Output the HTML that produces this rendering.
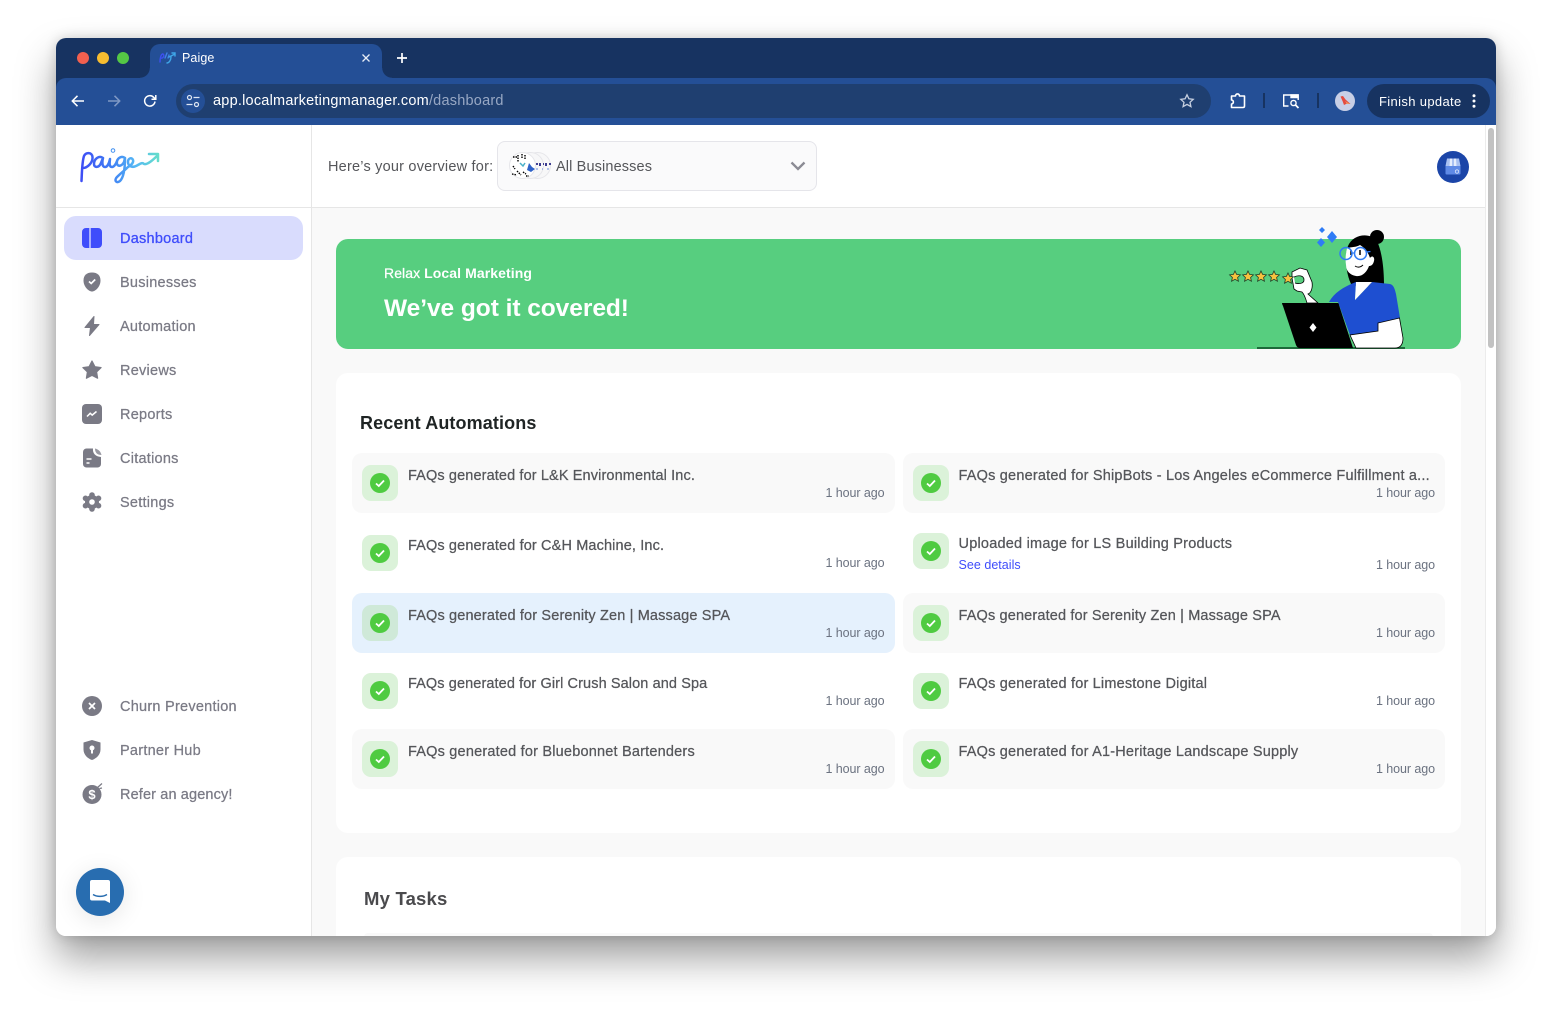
<!DOCTYPE html>
<html><head><meta charset="utf-8"><title>Paige</title>
<style>
*{box-sizing:border-box}
html,body{margin:0;padding:0;width:1552px;height:1010px;overflow:hidden;background:#fff;font-family:"Liberation Sans",sans-serif}
.a{position:absolute}
.t{position:absolute;white-space:nowrap}
#win{position:absolute;left:56px;top:38px;width:1440px;height:898px;border-radius:10px;box-shadow:0 22px 40px rgba(0,0,0,.38),0 0 12px rgba(0,0,0,.16)}
#clip{position:absolute;left:56px;top:38px;width:1440px;height:898px;border-radius:10px;overflow:hidden;background:#fff}
#abs{position:absolute;left:-56px;top:-38px;width:1552px;height:1010px}
.nav{font-size:14.5px;color:#7a7a85;font-weight:400;letter-spacing:.25px;-webkit-text-stroke:.25px #7a7a85}
.row{position:absolute;height:60px;border-radius:10px}
.bd{position:absolute;width:36px;height:36px;border-radius:9px;background:#dbf2d9}
.ck{position:absolute;left:8px;top:8px;width:20px;height:20px}
.rt{position:absolute;font-size:14.5px;color:#55565a;white-space:nowrap;-webkit-text-stroke:.25px #55565a}
.rs{position:absolute;font-size:12.5px;color:#6b7280;white-space:nowrap;letter-spacing:-.08px}
</style></head><body>
<div id="win"></div>
<div id="clip"><div id="abs">
<!-- browser chrome -->
<div class="a" style="left:56px;top:38px;width:1440px;height:60px;background:#173361"></div>
<div class="a" style="left:56px;top:78px;width:1440px;height:47px;background:#244f96;border-radius:10px 10px 0 0"></div>
<div class="a" style="left:150px;top:44px;width:232px;height:36px;background:#244f96;border-radius:10px 10px 0 0"></div>
<div class="a" style="left:140px;top:68px;width:10px;height:10px;background:radial-gradient(circle at 0 0,#173361 9.500px,#244f96 10px)"></div>
<div class="a" style="left:382px;top:68px;width:10px;height:10px;background:radial-gradient(circle at 100% 0,#173361 9.500px,#244f96 10px)"></div>
<div class="a" style="left:83px;top:58px;width:12px;height:12px;margin:-6px;border-radius:50%;background:#f2604f"></div>
<div class="a" style="left:103px;top:58px;width:12px;height:12px;margin:-6px;border-radius:50%;background:#f8bd30"></div>
<div class="a" style="left:123px;top:58px;width:12px;height:12px;margin:-6px;border-radius:50%;background:#55c845"></div>
<svg class="a" style="left:158px;top:50px" width="18" height="16" viewBox="0 0 18 16" fill="none" stroke-width="1.400" stroke-linecap="round"><path d="M2 12C2 8 3 4 5 4M5 4C7 5 5 9 3 8" stroke="#3d50ef"/><path d="M7 8l2-5M10 8l1-3" stroke="#3f7fe8"/><path d="M9 13c2 0 4-3 4-6M11 7l6-3M14 3h3v3" stroke="#3fa6e8"/></svg>
<div class="t" style="left:182px;top:51px;font-size:12.5px;color:#fff;letter-spacing:.1px">Paige</div>
<svg class="a" style="left:360px;top:52px" width="12" height="12" viewBox="0 0 12 12"><path d="M2.500 2.500l7 7M9.500 2.500l-7 7" stroke="#e8edf6" stroke-width="1.300"/></svg>
<svg class="a" style="left:395px;top:51px" width="14" height="14" viewBox="0 0 14 14"><path d="M7 2v10M2 7h10" stroke="#fff" stroke-width="1.700"/></svg>
<svg class="a" style="left:70px;top:93px" width="16" height="16" viewBox="0 0 16 16" fill="none" stroke="#fff" stroke-width="1.500"><path d="M14 8H2.500M7.500 2.800 2.300 8l5.200 5.200"/></svg>
<svg class="a" style="left:106px;top:93px" width="16" height="16" viewBox="0 0 16 16" fill="none" stroke="#7f98c4" stroke-width="1.500"><path d="M2 8h11.500M8.500 2.800 13.700 8l-5.200 5.200"/></svg>
<svg class="a" style="left:142px;top:93px" width="16" height="16" viewBox="0 0 16 16" fill="none" stroke="#fff" stroke-width="1.500"><path d="M13 8.500A5.200 5.200 0 1 1 11.500 4.200L13.500 6"/><path d="M13.800 2v4.300H9.500"/></svg>
<div class="a" style="left:176px;top:84px;width:1035px;height:34px;border-radius:17px;background:#1f3f70"></div>
<div class="a" style="left:181px;top:89px;width:24px;height:24px;border-radius:50%;background:#244f96"></div>
<svg class="a" style="left:185px;top:93px" width="16" height="16" viewBox="0 0 16 16" fill="none" stroke="#dfe7f4" stroke-width="1.200"><circle cx="4.500" cy="4.500" r="2"/><path d="M8.500 4.500h6M1.500 11.500h6"/><circle cx="11.500" cy="11.500" r="2"/></svg>
<div class="t" style="left:213px;top:93px;font-size:14.5px;letter-spacing:.22px;color:#fff">app.localmarketingmanager.com<span style="color:#98a8c4">/dashboard</span></div>
<svg class="a" style="left:1179px;top:93px" width="16" height="16" viewBox="0 0 16 16" fill="none" stroke="#c6cfdf" stroke-width="1.300"><path d="M8 1.800l1.900 4 4.300.5-3.200 3 .9 4.300L8 11.400l-3.900 2.200.9-4.300-3.200-3 4.300-.5z"/></svg>
<svg class="a" style="left:1229px;top:92px" width="18" height="18" viewBox="0 0 18 18" fill="none" stroke="#fff" stroke-width="1.600" stroke-linejoin="round"><path d="M2.500 4.500H6.500C6.500 1.800 10.500 1.800 10.500 4.500H15.500V14.500C15.500 15.500 15 16 14 16H2.500V12.500C5 12.500 5 8.500 2.500 8.500Z" transform="translate(0 -.5)"/></svg>
<div class="a" style="left:1263px;top:93px;width:2px;height:15px;background:#173361"></div>
<svg class="a" style="left:1282px;top:92px" width="18" height="18" viewBox="0 0 18 18" fill="none" stroke="#fff" stroke-width="1.400"><path d="M6.500 14H1.700V3h14.500v5"/><path d="M9 3h7v2.500H9z" fill="#fff"/><circle cx="11.500" cy="11" r="2.600"/><path d="M13.500 13l3 3" stroke-width="1.800"/></svg>
<div class="a" style="left:1317px;top:93px;width:2px;height:15px;background:#173361"></div>
<div class="a" style="left:1335px;top:91px;width:20px;height:20px;border-radius:50%;background:#c8cfe6"></div>
<svg class="a" style="left:1338px;top:94px" width="14" height="14" viewBox="0 0 14 14"><path d="M2.500 2.500 5 2l2.500 3.500L12.500 10 9 9.500 6 11 4.500 7z" fill="#e44a3e"/><path d="M7 7l5 3-3 0z" fill="#f09a5e"/></svg>
<div class="a" style="left:1367px;top:84px;width:123px;height:34px;border-radius:17px;background:#173361"></div>
<div class="t" style="left:1379px;top:94px;font-size:13px;color:#fff;letter-spacing:.35px">Finish update</div>
<svg class="a" style="left:1471px;top:93px" width="6" height="16" viewBox="0 0 6 16" fill="#fff"><circle cx="3" cy="2.800" r="1.500"/><circle cx="3" cy="8" r="1.500"/><circle cx="3" cy="13.200" r="1.500"/></svg>

<!-- page bg -->
<div class="a" style="left:312px;top:208px;width:1173px;height:730px;background:#f9f9f9"></div>
<div class="a" style="left:56px;top:207px;width:1429px;height:1px;background:#e6e6e6"></div>
<div class="a" style="left:311px;top:125px;width:1px;height:812px;background:#e6e6e6"></div>
<div class="a" style="left:1485px;top:125px;width:11px;height:812px;background:#fff;border-left:1px solid #ececec"></div>
<div class="a" style="left:1488px;top:128px;width:6px;height:220px;border-radius:3px;background:#c2c2c2"></div>

<!-- logo -->
<svg class="a" style="left:78px;top:144px" width="84" height="44" viewBox="0 0 84 44" fill="none" stroke-linecap="round" stroke-linejoin="round">
<defs><linearGradient id="lg" gradientUnits="userSpaceOnUse" x1="0" x2="82" y1="22" y2="22"><stop offset="0" stop-color="#3e48f5"/><stop offset=".4" stop-color="#3f7ef4"/><stop offset=".7" stop-color="#55b8f5"/><stop offset="1" stop-color="#66e0c8"/></linearGradient></defs>
<path d="M3.500 37C4 28 4 18 6 12C8 8 14 8 14.500 13C15 19 9 24 5 24M25 14C21 11 16 15 16 20C16 24 21 24 23 19L25 14C24 18 24 23 27 23C29 23 31 20 32 15C31.500 19 31 23 34 23C36 23 38 20 39 17M47 14C43 11 38 15 39 20C40 23 44 22 46 18L47 14C47 22 46 33 42 37C38 40 36 36 39 33C43 29 47 26 50 23C52 22 56 19 55 16C54 13 50 14 50 18C50 22 54 24 58 22C62 20 64 18 66 20C69 21 74 17 80 11M71 10H80V17" stroke="url(#lg)" stroke-width="2.500"/>
<circle cx="35" cy="6.500" r="1.800" stroke="#3f8ff0" stroke-width="1"/></svg>

<!-- top -->
<div class="t" style="left:328px;top:159px;font-size:14.5px;color:#55565a;letter-spacing:.21px">Here’s your overview for:</div>
<div class="a" style="left:497px;top:141px;width:320px;height:50px;border-radius:8px;background:#fafafb;border:1px solid #e5e5ea"></div>
<div class="a" style="left:524px;top:152px;width:27px;height:27px;border-radius:50%;background:#f7f7f8;border:1px solid #e6e6ea"></div>
<div class="a" style="left:517px;top:152px;width:27px;height:27px;border-radius:50%;background:#f7f7f8;border:1px solid #e6e6ea"></div>
<div class="a" style="left:509px;top:152px;width:27px;height:27px;border-radius:50%;background:#fff;border:1px solid #e6e6ea"></div>
<svg class="a" style="left:509px;top:152px" width="43" height="27" viewBox="0 0 43 27" fill="none"><path d="M4 5h4M9 3v7M13 2v5M16 3v4M3 22l5 1M8 19l4 4M14 20l3 2M4 14l2 3M17 24h3" stroke="#000" stroke-width="1.400" stroke-dasharray="1.500 1"/><path d="M11 11l3 3 2-3" stroke="#4ab0c8" stroke-width="1.500"/><path d="M20 11l3 4 3 2-4 3-4-2z" fill="#2f62c8"/><path d="M27 12h2M31 11v3M34 12h1M37 11v3M40 12h2" stroke="#272785" stroke-width="1.800"/><path d="M27 17h2M33 17h1M38 17h2" stroke="#6a8ce0"/></svg>
<div class="t" style="left:556px;top:159px;font-size:14.5px;color:#55565a;letter-spacing:.13px">All Businesses</div>
<svg class="a" style="left:789px;top:159px" width="18" height="14" viewBox="0 0 18 14" fill="none"><path d="M2.500 3.500 9 10l6.500-6.500" stroke="#8b8b94" stroke-width="2.300"/></svg>
<div class="a" style="left:1437px;top:151px;width:32px;height:32px;border-radius:50%;background:#1b45a8"></div>
<svg class="a" style="left:1442px;top:156px" width="22" height="22" viewBox="0 0 22 22"><path d="M3.500 10h15v7.500a1 1 0 0 1-1 1h-13a1 1 0 0 1-1-1z" fill="#5f8ae6"/><path d="M5 2.500h12L18.500 10H3.500z" fill="#a9c1f2"/><path d="M8 2.500h2v7.500H7.500zM12 2.500h2l.5 7.500H12z" fill="#f0f4ff" opacity=".85"/><circle cx="15" cy="15.500" r="1.700" fill="none" stroke="#dde7fb" stroke-width=".8"/></svg>

<!-- sidebar active -->
<div class="a" style="left:64px;top:216px;width:239px;height:44px;border-radius:12px;background:#d9dcfd"></div>
<svg class="a" style="left:82px;top:228px" width="20" height="20" viewBox="0 0 20 20"><path d="M7.300 0H4a4 4 0 0 0-4 4v12a4 4 0 0 0 4 4h3.300zM8.700 0H16a4 4 0 0 1 4 4v12a4 4 0 0 1-4 4H8.700z" fill="#3f4dfb"/></svg>
<div class="t nav" style="left:120px;top:231px;color:#3f4dfb;-webkit-text-stroke:.3px #3f4dfb">Dashboard</div>
<svg class="a" style="left:82px;top:272px" width="20" height="20" viewBox="0 0 20 20"><path d="M10 .5C15.500 .5 18.500 3.500 18.500 8.500 18.500 14.500 13.500 19.500 10 19.500 6.500 19.500 1.500 14.500 1.500 8.500 1.500 3.500 4.500 .5 10 .5z" fill="#7a7a85"/><path d="M7 9.500l2.200 2 4-4" fill="none" stroke="#fff" stroke-width="1.700"/></svg>
<div class="t nav" style="left:120px;top:275px">Businesses</div>
<svg class="a" style="left:82px;top:316px" width="20" height="20" viewBox="0 0 20 20"><path d="M12 .5 3 11.500h5.500L7.500 19.500 17 8.500h-5.500z" fill="#7a7a85" stroke="#7a7a85" stroke-linejoin="round"/></svg>
<div class="t nav" style="left:120px;top:319px">Automation</div>
<svg class="a" style="left:82px;top:360px" width="20" height="20" viewBox="0 0 20 20"><path d="M10 1l2.900 5.700 6.200.9-4.500 4.400 1 6.200L10 15.300l-5.600 2.900 1-6.200L.9 7.600l6.200-.9z" fill="#7a7a85" stroke="#7a7a85" stroke-width="1.200" stroke-linejoin="round"/></svg>
<div class="t nav" style="left:120px;top:363px">Reviews</div>
<svg class="a" style="left:82px;top:404px" width="20" height="20" viewBox="0 0 20 20"><rect width="20" height="20" rx="4" fill="#7a7a85"/><path d="M5 12.500l3.200-3.200 2 1.800L14.500 7.500" fill="none" stroke="#fff" stroke-width="1.500"/></svg>
<div class="t nav" style="left:120px;top:407px">Reports</div>
<svg class="a" style="left:82px;top:448px" width="20" height="20" viewBox="0 0 20 20"><path d="M4.500 .5H11C10.500 5 13 8.500 19 9V16a3.500 3.500 0 0 1-3.500 3.500H4.500A3.500 3.500 0 0 1 1 16V4A3.500 3.500 0 0 1 4.500 .5z" fill="#7a7a85"/><path d="M13 .5C17 1.500 18.500 3.500 19.500 7 15.500 7 13 5 13 .5z" fill="#9a9aa3"/><path d="M4.500 11h5M4.500 15h3" stroke="#fff" stroke-width="1.500"/></svg>
<div class="t nav" style="left:120px;top:451px">Citations</div>
<svg class="a" style="left:82px;top:492px" width="20" height="20" viewBox="0 0 20 20" fill="#7a7a85"><circle cx="10" cy="10" r="7"/><circle cx="10" cy="3" r="2.800"/><circle cx="10" cy="17" r="2.800"/><circle cx="3.500" cy="6.300" r="2.800"/><circle cx="16.500" cy="6.300" r="2.800"/><circle cx="3.500" cy="13.700" r="2.800"/><circle cx="16.500" cy="13.700" r="2.800"/><circle cx="10" cy="10" r="2.800" fill="#fff"/></svg>
<div class="t nav" style="left:120px;top:495px">Settings</div>
<svg class="a" style="left:82px;top:696px" width="20" height="20" viewBox="0 0 20 20"><circle cx="10" cy="10" r="10" fill="#7a7a85"/><path d="M7 7l6 6M13 7l-6 6" stroke="#fff" stroke-width="1.700"/></svg>
<div class="t nav" style="left:120px;top:699px">Churn Prevention</div>
<svg class="a" style="left:82px;top:740px" width="20" height="20" viewBox="0 0 20 20"><path d="M10 0 18.500 2.500V9.500C18.500 14.500 14.500 18.500 10 20 5.500 18.500 1.500 14.500 1.500 9.500V2.500z" fill="#7a7a85"/><circle cx="10" cy="8" r="2.500" fill="#fff"/><path d="M9 9h2v4.500H9z" fill="#fff"/></svg>
<div class="t nav" style="left:120px;top:743px">Partner Hub</div>
<svg class="a" style="left:82px;top:783px" width="21" height="21" viewBox="0 0 21 21"><circle cx="10" cy="11.500" r="9.500" fill="#7a7a85"/><path d="M15.500 4.500 20 .5M17.500 5.500l2.500-.5" stroke="#7a7a85" stroke-width="1.200"/><text x="10" y="16" text-anchor="middle" font-size="13" font-weight="700" fill="#fff" font-family="Liberation Sans">$</text></svg>
<div class="t nav" style="left:120px;top:787px;letter-spacing:.13px">Refer an agency!</div>

<div class="a" style="left:76px;top:868px;width:48px;height:48px;border-radius:50%;background:#286db0;box-shadow:0 4px 24px rgba(0,0,0,.1)"></div>
<svg class="a" style="left:89px;top:879px" width="22" height="26" viewBox="0 0 22 26"><path d="M3 1h16a2 2 0 0 1 2 2v21l-5-2.500H3a2 2 0 0 1-2-2V3a2 2 0 0 1 2-2z" fill="#fff"/><path d="M4 15.500c4 2.500 10 2.500 14 0" fill="none" stroke="#286db0" stroke-width="1.400"/></svg>

<!-- banner -->
<div class="a" style="left:336px;top:239px;width:1125px;height:110px;border-radius:12px;background:#57ce7f"></div>
<div class="t" style="left:384px;top:265px;font-size:14px;color:#fff;letter-spacing:.08px;font-weight:700"><span style="font-weight:400;-webkit-text-stroke:.25px #fff">Relax</span> Local Marketing</div>
<div class="t" style="left:384px;top:295px;font-size:24.5px;color:#fff;font-weight:700;letter-spacing:-.05px">We’ve got it covered!</div>
<svg class="a" style="left:1200px;top:220px" width="230" height="140" viewBox="0 0 230 140">
<path d="M122 7l3 3-3 3-3-3zM132 11l5 6-5 6-5-6zM121 18l4 4.500-4 4.500-4-4.500z" fill="#2f7cf6"/>
<path d="M57 128H205" stroke="#1c6a3a" stroke-width="2"/>
<circle cx="177" cy="17" r="7" fill="#000"/>
<path d="M148 26C153 14 170 12 177 21C182 32 184 48 184 66L152 66C146 55 144 36 148 26z" fill="#000"/>
<path d="M147 28C152 27 157 27 160 25C165 28 168 32 170 38C172 35 175 37 174 41C173 45 171 46 169 46C167 52 162 57 156 56C150 55 146 51 146 45C145 38 146 33 147 28z" fill="#fff"/>
<path d="M155 46c3 2 6 1 8-1" stroke="#000" stroke-width="1" fill="none"/>
<path d="M151 30v5" stroke="#000" stroke-width="1.500"/><path d="M160 30v5" stroke="#000" stroke-width="1.500"/>
<circle cx="146" cy="33.500" r="6" fill="none" stroke="#2f7cf6" stroke-width="1.500"/><circle cx="160.500" cy="33.500" r="6" fill="none" stroke="#2f7cf6" stroke-width="1.500"/><path d="M152 33h3M166.500 32l4-.5" stroke="#2f7cf6" stroke-width="1.300"/>
<path d="M129 82C134 73 143 67 156 62L155 80 172 62L190 64C194 65 195 70 196 74L200 98 178 103 179 111 150 115 138 82z" fill="#1e4fd1"/>
<path d="M156 62 155 80 172 62z" fill="#fff"/>
<path d="M178 103 199.500 98 203 118C203 125 200 128 195 128L156 128 150 115 178 111z" fill="#fff" stroke="#000" stroke-width=".8"/>
<path d="M107 83C105 76 103 73 102 72L97 71L94 69L92 58L92 52L100 48L107 50L112 62C113 68 111 73 108 74L118 83z" fill="#fff" stroke="#000" stroke-width=".8"/>
<path d="M94 57C98 55 104 55 104 60C104 64 98 64 95 63" fill="#57ce7f" stroke="#000" stroke-width=".8"/>
<path d="M82 83H137C138 83 139 83 139 85L153 128H100C98 128 97 127 96 125L83 86C82 84 82 83 82 83z" fill="#000"/>
<path d="M113 103l3.500 4.500-3.500 4.500-3.500-4.500z" fill="#fff"/>
<g fill="#f7c23f" stroke="#1f3d26" stroke-width=".8"><path id="s" d="M35 51l1.600 3.400 3.800.5-2.800 2.600.8 3.700L35 59.300l-3.400 1.900.8-3.700-2.800-2.600 3.800-.5z"/><use href="#s" x="13"/><use href="#s" x="26"/><use href="#s" x="39"/><use href="#s" x="53" y="2"/></g>
</svg>

<!-- cards -->
<div class="a" style="left:336px;top:373px;width:1125px;height:460px;border-radius:12px;background:#fff"></div>
<div class="t" style="left:360px;top:413px;font-size:18px;font-weight:700;color:#1f2424;letter-spacing:.12px">Recent Automations</div>

<div class="row" style="left:352px;top:453px;width:543px;background:#f9f9f9"></div>
<div class="row" style="left:903px;top:453px;width:542px;background:#f9f9f9"></div>
<div class="row" style="left:352px;top:593px;width:543px;background:#e5f1fd"></div>
<div class="row" style="left:903px;top:593px;width:542px;background:#f9f9f9"></div>
<div class="row" style="left:352px;top:729px;width:543px;background:#f9f9f9"></div>
<div class="row" style="left:903px;top:729px;width:542px;background:#f9f9f9"></div>

<!-- left col -->
<div class="bd" style="left:362px;top:465px"><svg class="ck" viewBox="0 0 20 20"><circle cx="10" cy="10" r="10" fill="#4fcb41"/><path d="M6 10.500l2.800 2.500 5.200-5.500" fill="none" stroke="#fff" stroke-width="1.800"/></svg></div>
<div class="rt" style="left:408px;top:468px;letter-spacing:.12px">FAQs generated for L&amp;K Environmental Inc.</div>
<div class="rs" style="left:825.500px;top:485.500px">1 hour ago</div>

<div class="bd" style="left:362px;top:535px"><svg class="ck" viewBox="0 0 20 20"><circle cx="10" cy="10" r="10" fill="#4fcb41"/><path d="M6 10.500l2.800 2.500 5.200-5.500" fill="none" stroke="#fff" stroke-width="1.800"/></svg></div>
<div class="rt" style="left:408px;top:538px;letter-spacing:.13px">FAQs generated for C&amp;H Machine, Inc.</div>
<div class="rs" style="left:825.500px;top:555.500px">1 hour ago</div>

<div class="bd" style="left:362px;top:605px;background:#cfe9d8"><svg class="ck" viewBox="0 0 20 20"><circle cx="10" cy="10" r="10" fill="#4fcb41"/><path d="M6 10.500l2.800 2.500 5.200-5.500" fill="none" stroke="#fff" stroke-width="1.800"/></svg></div>
<div class="rt" style="left:408px;top:608px;letter-spacing:.15px">FAQs generated for Serenity Zen | Massage SPA</div>
<div class="rs" style="left:825.500px;top:625.500px">1 hour ago</div>

<div class="bd" style="left:362px;top:673px"><svg class="ck" viewBox="0 0 20 20"><circle cx="10" cy="10" r="10" fill="#4fcb41"/><path d="M6 10.500l2.800 2.500 5.200-5.500" fill="none" stroke="#fff" stroke-width="1.800"/></svg></div>
<div class="rt" style="left:408px;top:676px;letter-spacing:.1px">FAQs generated for Girl Crush Salon and Spa</div>
<div class="rs" style="left:825.500px;top:693.500px">1 hour ago</div>

<div class="bd" style="left:362px;top:741px"><svg class="ck" viewBox="0 0 20 20"><circle cx="10" cy="10" r="10" fill="#4fcb41"/><path d="M6 10.500l2.800 2.500 5.200-5.500" fill="none" stroke="#fff" stroke-width="1.800"/></svg></div>
<div class="rt" style="left:408px;top:744px;letter-spacing:.2px">FAQs generated for Bluebonnet Bartenders</div>
<div class="rs" style="left:825.500px;top:761.500px">1 hour ago</div>

<!-- right col -->
<div class="bd" style="left:913px;top:465px"><svg class="ck" viewBox="0 0 20 20"><circle cx="10" cy="10" r="10" fill="#4fcb41"/><path d="M6 10.500l2.800 2.500 5.200-5.500" fill="none" stroke="#fff" stroke-width="1.800"/></svg></div>
<div class="rt" style="left:958.500px;top:468px;letter-spacing:.2px">FAQs generated for ShipBots - Los Angeles eCommerce Fulfillment a...</div>
<div class="rs" style="left:1376px;top:485.500px">1 hour ago</div>

<div class="bd" style="left:913px;top:533px"><svg class="ck" viewBox="0 0 20 20"><circle cx="10" cy="10" r="10" fill="#4fcb41"/><path d="M6 10.500l2.800 2.500 5.200-5.500" fill="none" stroke="#fff" stroke-width="1.800"/></svg></div>
<div class="rt" style="left:958.500px;top:536px;letter-spacing:.22px">Uploaded image for LS Building Products</div>
<div class="t" style="left:958.500px;top:557.500px;font-size:12.500px;color:#3f4dfb;letter-spacing:.03px">See details</div>
<div class="rs" style="left:1376px;top:557.500px">1 hour ago</div>

<div class="bd" style="left:913px;top:605px"><svg class="ck" viewBox="0 0 20 20"><circle cx="10" cy="10" r="10" fill="#4fcb41"/><path d="M6 10.500l2.800 2.500 5.200-5.500" fill="none" stroke="#fff" stroke-width="1.800"/></svg></div>
<div class="rt" style="left:958.500px;top:608px;letter-spacing:.15px">FAQs generated for Serenity Zen | Massage SPA</div>
<div class="rs" style="left:1376px;top:625.500px">1 hour ago</div>

<div class="bd" style="left:913px;top:673px"><svg class="ck" viewBox="0 0 20 20"><circle cx="10" cy="10" r="10" fill="#4fcb41"/><path d="M6 10.500l2.800 2.500 5.200-5.500" fill="none" stroke="#fff" stroke-width="1.800"/></svg></div>
<div class="rt" style="left:958.500px;top:676px;letter-spacing:.19px">FAQs generated for Limestone Digital</div>
<div class="rs" style="left:1376px;top:693.500px">1 hour ago</div>

<div class="bd" style="left:913px;top:741px"><svg class="ck" viewBox="0 0 20 20"><circle cx="10" cy="10" r="10" fill="#4fcb41"/><path d="M6 10.500l2.800 2.500 5.200-5.500" fill="none" stroke="#fff" stroke-width="1.800"/></svg></div>
<div class="rt" style="left:958.500px;top:744px;letter-spacing:.2px">FAQs generated for A1-Heritage Landscape Supply</div>
<div class="rs" style="left:1376px;top:761.500px">1 hour ago</div>

<div class="a" style="left:336px;top:857px;width:1125px;height:90px;border-radius:12px;background:#fff"></div>
<div class="t" style="left:364px;top:888px;font-size:18.500px;font-weight:700;color:#4a4a4d;letter-spacing:.2px">My Tasks</div>
<div class="a" style="left:364px;top:933px;width:1069px;height:8px;border-radius:8px;background:#f9f9f9"></div>
</div></div>
</body></html>
